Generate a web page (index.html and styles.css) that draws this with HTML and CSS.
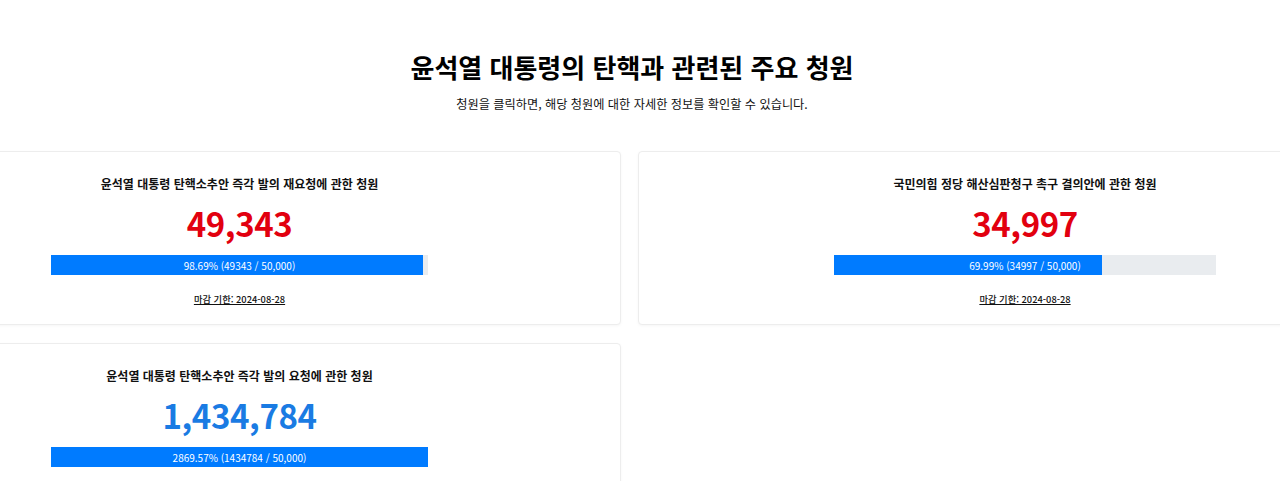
FILE: index.html
```html
<!DOCTYPE html>
<html lang="ko">
<head>
<meta charset="utf-8">
<title>윤석열 대통령의 탄핵과 관련된 주요 청원</title>
<link rel="stylesheet" href="styles.css">
</head>
<body>
<div class="page">
  <header class="intro">
    <h1 class="heading">윤석열 대통령의 탄핵과 관련된 주요 청원</h1>
    <p class="subtitle">청원을 클릭하면, 해당 청원에 대한 자세한 정보를 확인할 수 있습니다.</p>
  </header>
  <div class="grid">
    <section class="card">
      <h2 class="card-title">윤석열 대통령 탄핵소추안 즉각 발의 재요청에 관한 청원</h2>
      <div class="count count-red">49,343</div>
      <div class="progress">
        <div class="progress-fill" style="width: 98.69%"></div>
        <span class="progress-label">98.69% (49343 / 50,000)</span>
      </div>
      <a class="deadline">마감 기한: 2024-08-28</a>
    </section>
    <section class="card card-wide">
      <h2 class="card-title">국민의힘 정당 해산심판청구 촉구 결의안에 관한 청원</h2>
      <div class="count count-red">34,997</div>
      <div class="progress">
        <div class="progress-fill" style="width: 69.99%"></div>
        <span class="progress-label">69.99% (34997 / 50,000)</span>
      </div>
      <a class="deadline">마감 기한: 2024-08-28</a>
    </section>
    <section class="card">
      <h2 class="card-title">윤석열 대통령 탄핵소추안 즉각 발의 요청에 관한 청원</h2>
      <div class="count count-blue">1,434,784</div>
      <div class="progress">
        <div class="progress-fill" style="width: 100%"></div>
        <span class="progress-label">2869.57% (1434784 / 50,000)</span>
      </div>
      <a class="deadline">마감 기한: 2024-08-28</a>
    </section>
  </div>
</div>
</body>
</html>
```

FILE: styles.css
```css
html, body {
  margin: 0;
  padding: 0;
  background: #ffffff;
}

body {
  font-family: "Noto Sans CJK KR", "Noto Sans", sans-serif;
  color: #111111;
  overflow: hidden;
}

.page {
  width: 1280px;
  overflow: hidden;
}

.intro {
  display: flex;
  flex-direction: column;
  align-items: center;
  padding-top: 50px;
  padding-right: 16px;
}

.heading {
  margin: 0;
  font-size: 26px;
  line-height: 34px;
  font-weight: 700;
  color: #000000;
}

.subtitle {
  margin: 12px 0 0;
  font-size: 12.2px;
  line-height: 16px;
  color: #111111;
}

.grid {
  display: grid;
  grid-template-columns: 763px 774px;
  column-gap: 17px;
  row-gap: 18px;
  margin-top: 39px;
  margin-left: -142px;
  width: max-content;
}

.card {
  display: flex;
  flex-direction: column;
  align-items: center;
  padding: 23px 0 18px;
  border: 1px solid #ededed;
  border-radius: 4px;
  box-shadow: 0 1px 3px rgba(0, 0, 0, 0.04);
  background: #ffffff;
}

.card-title {
  margin: 0;
  font-size: 12px;
  line-height: 18px;
  font-weight: 700;
  color: #111111;
}

.count {
  margin-top: 10px;
  font-size: 33px;
  line-height: 40px;
  font-weight: 700;
  letter-spacing: -0.4px;
}

.count-red {
  color: #e2000f;
}

.count-blue {
  color: #1a7be3;
}

.progress {
  position: relative;
  margin-top: 12px;
  width: 49.6%;
  height: 20px;
  background: #e9ecef;
  overflow: hidden;
}

.progress-fill {
  height: 100%;
  background: #007bff;
}

.progress-label {
  position: absolute;
  inset: 0;
  display: flex;
  align-items: center;
  justify-content: center;
  font-size: 10px;
  color: #ffffff;
}

.deadline {
  margin-top: 17px;
  font-size: 9.3px;
  line-height: 14px;
  font-weight: 500;
  color: #111111;
  text-decoration: underline;
}
```
